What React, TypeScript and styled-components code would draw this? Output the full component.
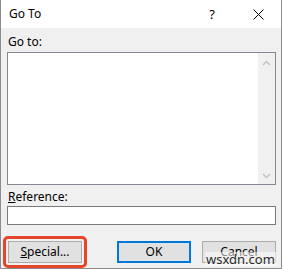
import React from 'react'
import styled, { createGlobalStyle } from 'styled-components'

const GlobalStyle = createGlobalStyle`
  html, body {
    margin: 0;
    padding: 0;
    background: #ffffff;
  }
  * {
    box-sizing: border-box;
  }
`

const Window = styled.div`
  width: 282px;
  height: 269px;
  border-left: 1px solid #8c8c8c;
  border-right: 1px solid #8c8c8c;
  border-bottom: 1px solid #8c8c8c;
  display: flex;
  flex-direction: column;
  font-family: 'Noto Sans', 'Liberation Sans', sans-serif;
  font-size: 12px;
  color: #000000;
  position: relative;
`

const TitleBar = styled.div`
  height: 30px;
  background: #ffffff;
  display: flex;
  align-items: center;
  padding-left: 8px;
`

const Title = styled.div`
  flex: 1;
  font-size: 12px;
  padding-bottom: 1px;
`

const HelpGlyph = styled.div`
  width: 46px;
  text-align: center;
  font-size: 13px;
  margin-right: 0;
`

const CloseGlyph = styled.div`
  width: 46px;
  display: flex;
  justify-content: center;
  align-items: center;
`

const Body = styled.div`
  flex: 1;
  background: #f0f0f0;
  padding: 6px 5px 0 6px;
  display: flex;
  flex-direction: column;
`

const Label = styled.div<{ $top?: number }>`
  line-height: 16px;
  margin-top: ${(p) => p.$top ?? 0}px;
  padding-left: 1px;
`

const ListBox = styled.div`
  margin-top: 2px;
  height: 133px;
  background: #ffffff;
  border: 1px solid #828790;
  display: flex;
  justify-content: flex-end;
`

const ScrollBar = styled.div`
  width: 17px;
  background: #f0f0f0;
  display: flex;
  flex-direction: column;
  justify-content: space-between;
  align-items: center;
  padding: 7px 0 5px;
`

const TextInput = styled.div`
  margin-top: 1px;
  height: 19px;
  background: #ffffff;
  border: 1px solid #7a7a7a;
`

const ButtonRow = styled.div`
  margin-top: 11px;
  display: flex;
  align-items: center;
`

const Highlight = styled.div`
  padding: 2px 2px;
  margin-left: -4px;
  border: 3px solid #e5452a;
  border-radius: 5px;
`

const Button = styled.div<{ $default?: boolean }>`
  width: 74px;
  height: 22px;
  background: #e1e1e1;
  border: ${(p) => (p.$default ? '2px solid #0078d7' : '1px solid #adadad')};
  display: flex;
  align-items: center;
  justify-content: center;
  font-size: 12px;
  padding-bottom: 1px;
`

const Spacer = styled.div`
  flex: 1;
`

const Gap = styled.div`
  width: 11px;
`

const Watermark = styled.div`
  position: absolute;
  left: 204px;
  top: 252px;
  font-family: 'Noto Sans', 'Liberation Sans', sans-serif;
  font-size: 13px;
  line-height: 14px;
  color: #2a2a2a;
  background: rgba(255, 255, 255, 0.55);
  padding: 0 1px;
`

const Chevron = ({ down }: { down?: boolean }) => (
  <svg width="9" height="6" viewBox="0 0 9 6">
    <polyline
      points={down ? '1,1 4.5,4.5 8,1' : '1,5 4.5,1.5 8,5'}
      fill="none"
      stroke="#c2c2c2"
      strokeWidth="1.5"
    />
  </svg>
)

const App = () => {
  return (
    <>
      <GlobalStyle />
      <Window>
        <TitleBar>
          <Title>Go To</Title>
          <HelpGlyph>?</HelpGlyph>
          <CloseGlyph>
            <svg width="11" height="11" viewBox="0 0 11 11">
              <path d="M0.5 0.5 L10.5 10.5 M10.5 0.5 L0.5 10.5" stroke="#000" strokeWidth="1" />
            </svg>
          </CloseGlyph>
        </TitleBar>
        <Body>
          <Label>Go to:</Label>
          <ListBox>
            <ScrollBar>
              <Chevron />
              <Chevron down />
            </ScrollBar>
          </ListBox>
          <Label $top={4}>
            <u>R</u>eference:
          </Label>
          <TextInput />
          <ButtonRow>
            <Highlight>
              <Button>
                <span>
                  <u>S</u>pecial...
                </span>
              </Button>
            </Highlight>
            <Spacer />
            <Button $default>OK</Button>
            <Gap />
            <Button>Cancel</Button>
          </ButtonRow>
        </Body>
        <Watermark>wsxdn.com</Watermark>
      </Window>
    </>
  )
}

export default App
